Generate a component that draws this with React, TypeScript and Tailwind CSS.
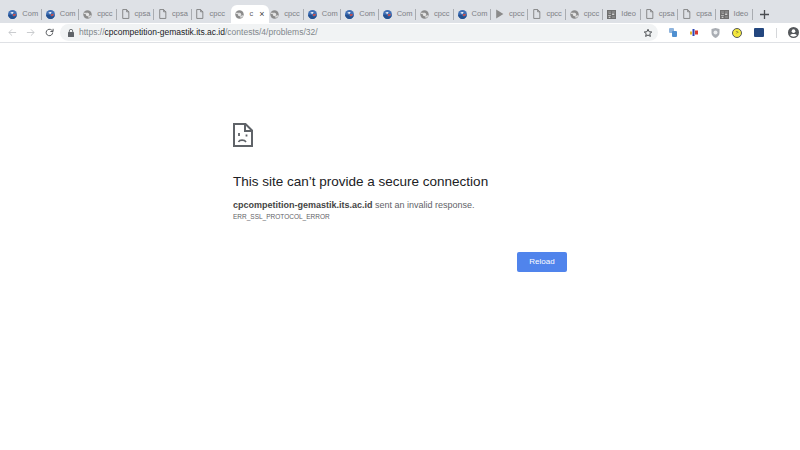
const Globe = () => (
  <svg width="9" height="9" viewBox="0 0 16 16" className="shrink-0">
    <circle cx="8" cy="8" r="8" fill="#3f6fb5" />
    <path d="M0 9c3-2 6-1 8 1s5 2 8-1c-1 4-4 7-8 7S1 13 0 9z" fill="#24508f" />
    <path d="M4 5c2-2 4-2 6-1l-2 3-2-1z" fill="#e9eef5" />
    <path d="M8 8l5-1 1 2-4 2z" fill="#d9483b" />
  </svg>
);
const GrayGlobe = () => (
  <svg width="9" height="9" viewBox="0 0 16 16" className="shrink-0">
    <circle cx="8" cy="8" r="7.5" fill="#8c8c8c" />
    <circle cx="8" cy="8" r="3" fill="#e6e6e6" />
    <path d="M1 5h7v2H2zM9 11l5-2v3l-4 2z" fill="#dcdcdc" />
  </svg>
);
const Doc = () => (
  <svg width="9" height="10" viewBox="0 0 16 18" fill="none" stroke="#777" strokeWidth="1.5" className="shrink-0">
    <path d="M3 1h7l4 4v12H3z" />
    <path d="M10 1v4h4" />
  </svg>
);
const Play = () => (
  <svg width="9" height="10" viewBox="0 0 16 18" className="shrink-0">
    <path d="M2 1l13 8-13 8z" fill="#8a8a8a" />
  </svg>
);
const Ideo = () => (
  <svg width="9" height="9" viewBox="0 0 16 16" className="shrink-0">
    <rect width="16" height="16" fill="#6f6f6f" />
    <path d="M2 3h5v1H2zM9 3h5v1H9zM3 6h4v1H3zM9 6h4v3H9zM2 9h5v1H2zM3 12h3v2H3zM9 12h5v1H9z" fill="#cfcfcf" />
  </svg>
);

type Kind = "g" | "a" | "d" | "p" | "i";
const tabs: [Kind, string][] = [
  ["g", "Com"], ["g", "Com"], ["a", "cpcc"], ["d", "cpsa"], ["d", "cpsa"], ["d", "cpcc"],
  ["a", "c"], ["a", "cpcc"], ["g", "Com"], ["g", "Com"], ["g", "Com"], ["a", "cpcc"], ["g", "Com"],
  ["p", "cpcc"], ["d", "cpcc"], ["a", "cpcc"], ["i", "Ideo"], ["d", "cpsa"], ["d", "cpsa"], ["i", "Ideo"],
];
const icon = (k: Kind) =>
  k === "g" ? <Globe /> : k === "a" ? <GrayGlobe /> : k === "d" ? <Doc /> : k === "p" ? <Play /> : <Ideo />;

export default function App() {
  return (
    <div className="w-[800px] h-[450px] overflow-hidden bg-white font-['Liberation_Sans',sans-serif]">
      <div className="h-[23px] bg-[#dee1e6] flex items-end pl-[4.8px]">
        {tabs.map(([k, t], i) =>
          i === 6 ? (
            <div key={i} className="relative z-10 w-[37.45px] h-[18px] flex items-center">
              <div className="absolute left-[1.5px] w-[38.5px] top-0 bottom-0 bg-white rounded-t-[6px]" />
              <div className="relative flex items-center pl-[6px]">
                <GrayGlobe />
                <span className="ml-[5px] text-[7.5px] text-[#5f6368]">c</span>
                <span className="ml-[6px] text-[9px] leading-none text-[#444]">×</span>
              </div>
            </div>
          ) : (
            <div key={i} className="w-[37.45px] h-[18px] flex items-center pl-[3.5px]">
              <div className="flex items-center gap-[5px] w-[32.5px] overflow-hidden">
                {icon(k)}
                <span className="text-[7.5px] text-[#7d8085] whitespace-nowrap">{t}</span>
              </div>
              {i !== 5 && i !== 6 && <div className="w-px h-[11px] bg-[#a9acb1]" />}
            </div>
          )
        )}
        <div className="h-[18px] flex items-center ml-[6px]">
          <svg width="9" height="9" viewBox="0 0 9 9" stroke="#4a4d51" strokeWidth="1.3">
            <path d="M4.5 0v9M0 4.5h9" />
          </svg>
        </div>
      </div>

      <div className="h-[20px] bg-white border-b border-[#dfe1e5] flex items-center">
        <div className="w-[60px] flex items-center pl-[8px] gap-[9px] shrink-0">
          <svg width="9" height="9" viewBox="0 0 10 10" fill="none" stroke="#c4c6c9" strokeWidth="1"><path d="M9 5H1M4.5 1.5L1 5l3.5 3.5" /></svg>
          <svg width="9" height="9" viewBox="0 0 10 10" fill="none" stroke="#c4c6c9" strokeWidth="1"><path d="M1 5h8M5.5 1.5L9 5 5.5 8.5" /></svg>
          <svg width="9" height="9" viewBox="0 0 10 10" fill="none" stroke="#55585c" strokeWidth="1.1" className="ml-[1px]"><path d="M8.5 5A3.6 3.6 0 1 1 7.4 2.4L8.7 3.6" /><path d="M9 .9v3H6" /></svg>
        </div>
        <div className="w-[598px] h-[17px] rounded-full bg-[#f1f3f4] flex items-center pl-[8px] pr-[5px] shrink-0">
          <svg width="6" height="8" viewBox="0 0 6 8" className="shrink-0"><rect y="3" width="6" height="5" rx=".6" fill="#5f6368" /><path d="M1.3 3V2a1.7 1.7 0 0 1 3.4 0v1" fill="none" stroke="#5f6368" strokeWidth=".9" /></svg>
          <span className="ml-[5px] text-[8.5px] text-[#80868b] whitespace-nowrap">
            https://<span className="text-[#202124]">cpcompetition-gemastik.its.ac.id</span>/contests/4/problems/32/
          </span>
          <svg width="10" height="10" viewBox="0 0 24 24" fill="none" stroke="#4a4d51" strokeWidth="2.4" className="ml-auto">
            <path d="M12 3l2.7 6 6.3.6-4.8 4.2 1.5 6.4L12 16.8 6.300 20.200l1.500-6.400L3 9.600 9.300 9z" />
          </svg>
        </div>
        <div className="flex items-center shrink-0 pl-[11px]">
          <svg width="8" height="9" viewBox="0 0 8 9" className="shrink-0"><rect width="5" height="5" rx="1" fill="#8fb4dd" /><rect x="3" y="3" width="5" height="6" rx="1" fill="#4f8fd0" /></svg>
          <svg width="8" height="7" viewBox="0 0 8 7" className="shrink-0 ml-[13px]"><rect y="2.500" width="2" height="3" fill="#e8b82a" /><rect x="2.500" width="2" height="7" fill="#2f45b5" /><rect x="5" y="1.500" width="3" height="4" fill="#d9382f" /></svg>
          <svg width="9" height="10" viewBox="0 0 9 10" className="shrink-0 ml-[13px]"><path d="M.5 1l4-1 4 1v4c0 2.500-2 4-4 5-2-1-4-2.500-4-5z" fill="#a9adb3" /><circle cx="4.500" cy="4.500" r="2" fill="#eceef0" /></svg>
          <div className="ml-[12px] w-[10px] h-[10px] rounded-full bg-[#f4e83c] border border-[#55585c] flex items-center justify-center text-[5px] leading-none text-[#333]">&gt;</div>
          <div className="ml-[12px] w-[10px] h-[9px] rounded-[1px] bg-[#24477f]" />
          <div className="ml-[12px] w-px h-[10px] bg-[#d5d7da]" />
          <svg width="11" height="11" viewBox="0 0 24 24" className="shrink-0 ml-[11px]"><circle cx="12" cy="12" r="12" fill="#55585c" /><circle cx="12" cy="9" r="4" fill="#fff" /><path d="M4.500 18c2-3.500 13-3.500 15 0-3.500 4-11.500 4-15 0z" fill="#fff" /></svg>
          <div className="ml-[11px] flex flex-col gap-[1.5px]">
            <div className="w-[2px] h-[2px] rounded-full bg-[#55585c]" />
            <div className="w-[2px] h-[2px] rounded-full bg-[#55585c]" />
            <div className="w-[2px] h-[2px] rounded-full bg-[#55585c]" />
          </div>
        </div>
      </div>

      <div className="ml-[233px] w-[334px] pt-[80px]">
        <svg width="20" height="24" viewBox="0 0 20 24" fill="none" stroke="#5f6368" strokeWidth="2" className="block">
          <path d="M1 1h11.500L19 7.500V23H1z" />
          <path d="M12 1v7h7" />
          <path d="M5.500 19c1-2.500 6-2.500 7.500 0" strokeWidth="1.600" />
          <path d="M6 10v3M13.500 11.500v2" strokeWidth="1.800" />
        </svg>
        <h1 className="mt-[27px] text-[13.5px] leading-[16px] font-normal text-[#202124] whitespace-nowrap">This site can’t provide a secure connection</h1>
        <p className="mt-[9px] text-[9px] leading-[12px] text-[#5f6368] whitespace-nowrap"><b className="font-bold text-[#444]">cpcompetition-gemastik.its.ac.id</b> sent an invalid response.</p>
        <p className="mt-[1px] text-[6.5px] leading-[10px] text-[#5f6368] whitespace-nowrap">ERR_SSL_PROTOCOL_ERROR</p>
        <div className="flex justify-end mt-[30px]">
          <button className="w-[50px] h-[20px] rounded-[2px] bg-[#5084ec] text-white text-[8px]">Reload</button>
        </div>
      </div>
    </div>
  );
}
